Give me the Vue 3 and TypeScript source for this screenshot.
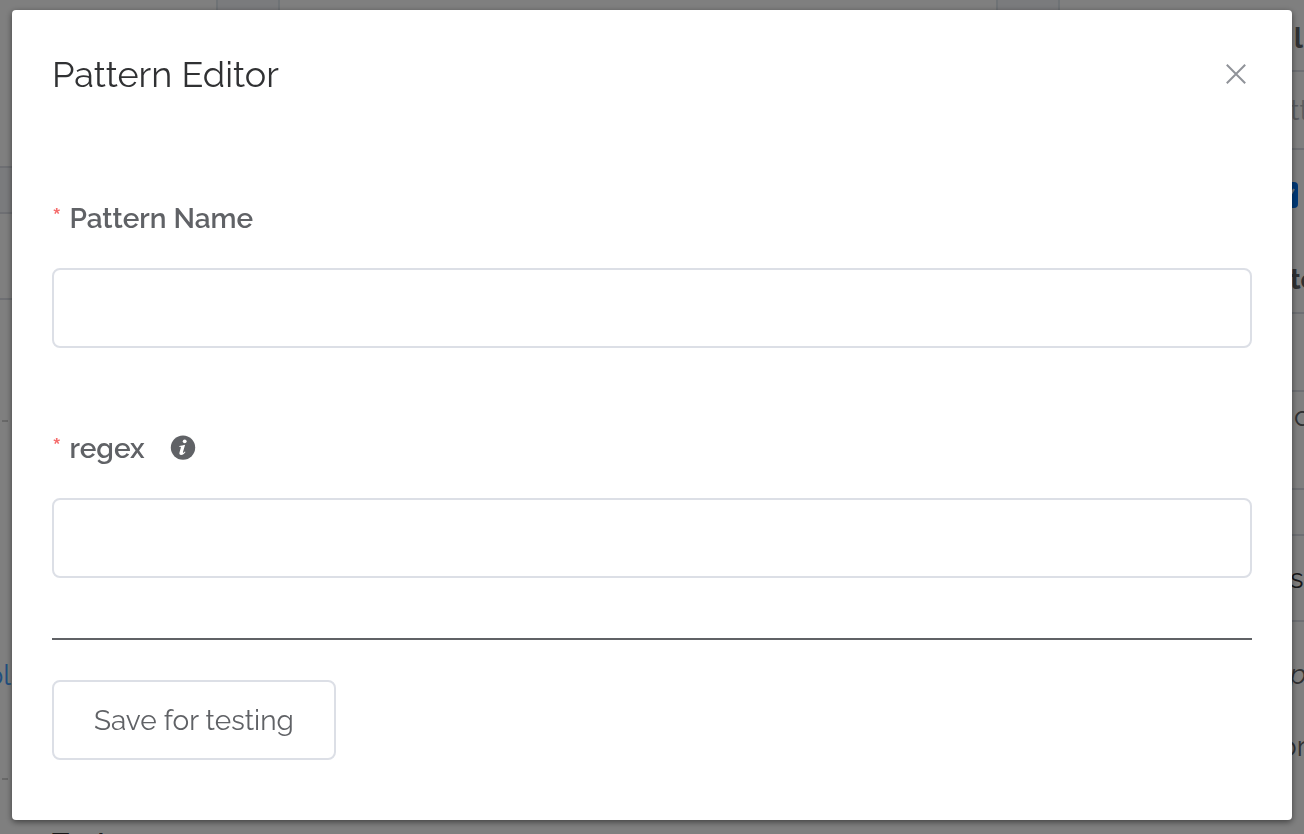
<script setup lang="ts">
import { ref } from 'vue'

interface Cell {
  text?: string
  kind: string
  height: number
}

const open = ref(true)
const patternName = ref('')
const regex = ref('')

const leftCells: Cell[] = [
  { kind: 'line', height: 168 },
  { kind: 'line band', height: 46 },
  { kind: 'line', height: 86 },
  { kind: 'dash', height: 122 },
  { kind: 'blank', height: 208 },
  { kind: 'link', height: 90, text: 'ble' },
  { kind: 'dash', height: 60 },
]

const rightCells: Cell[] = [
  { kind: 'line strong inset low', height: 72, text: 'l' },
  { kind: 'line muted', height: 78, text: 'tt' },
  { kind: 'check', height: 90 },
  { kind: 'line strong low', height: 74, text: 'te' },
  { kind: 'line', height: 78 },
  { kind: 'inset', height: 48, text: 'c' },
  { kind: 'line', height: 50 },
  { kind: 'line', height: 46 },
  { kind: 'line dark', height: 86, text: 's' },
  { kind: 'slanted', height: 104, text: 'p' },
  { kind: 'outset', height: 40, text: 'or' },
]
</script>

<template>
  <div class="page">
    <div class="columns">
      <div class="side">
        <div v-for="(cell, i) in leftCells" :key="i" class="cell" :class="cell.kind" :style="{ height: cell.height + 'px' }">
          <a v-if="cell.text" href="#">{{ cell.text }}</a>
        </div>
      </div>
      <div class="middle">
        <div class="tabs"><span class="tab"></span><span class="tab"></span></div>
        <div class="next">Test</div>
      </div>
      <div class="side right">
        <div v-for="(cell, i) in rightCells" :key="i" class="cell" :class="cell.kind" :style="{ height: cell.height + 'px' }">
          <svg v-if="cell.kind === 'check'" width="28" height="26" viewBox="0 0 28 26">
            <rect width="28" height="26" rx="4" fill="#0074f0" />
            <path d="M12 14l5 5 7-12" fill="none" stroke="#fff" stroke-width="2" />
          </svg>
          <span v-else>{{ cell.text }}</span>
        </div>
      </div>
    </div>

    <div v-if="open" class="overlay">
      <section class="dialog" role="dialog" aria-modal="true" aria-labelledby="dialog-title">
        <header class="header">
          <h1 id="dialog-title">Pattern Editor</h1>
          <button class="close" type="button" aria-label="Close" @click="open = false">
            <svg width="32" height="32" viewBox="0 0 32 32">
              <path d="M6.8 6.8l18.4 18.4M25.2 6.8l-18.4 18.4" fill="none" stroke="#909399" stroke-width="2" />
            </svg>
          </button>
        </header>
        <form @submit.prevent>
          <div class="field">
            <label for="pattern-name"><span class="star">*</span>Pattern Name</label>
            <input id="pattern-name" v-model="patternName" type="text" required />
          </div>
          <div class="field">
            <label for="regex"><span class="star">*</span>regex
              <svg class="info" width="26" height="26" viewBox="0 0 26 26" aria-hidden="true">
                <circle cx="13" cy="12.6" r="12.2" fill="#606266" />
                <circle cx="14.7" cy="6.3" r="1.9" fill="#fff" />
                <path d="M9.3 10.9c1.8-.2 3.6-.6 5.8-1.1l-2.1 7.3c-.2.8.1.9.5.6.5-.3.9-.8 1.3-1.3l.7.5c-1.3 2-2.8 3-4.3 3-1.6 0-2.1-.9-1.7-2.3l1.3-4.8c.2-.8 0-1.1-.7-1.1h-.9z" fill="#fff" />
              </svg>
            </label>
            <input id="regex" v-model="regex" type="text" required />
          </div>
          <hr />
          <button class="save" type="submit">Save for testing</button>
        </form>
      </section>
    </div>
  </div>
</template>

<style>
body {
  margin: 0;
}
</style>

<style scoped>
.page {
  height: 100vh;
  overflow: hidden;
  background: #fff;
  color: #606266;
  font-family: Raleway, Lato, "Open Sans", sans-serif;
  font-size: 28px;
}
.page * {
  box-sizing: border-box;
}
.columns {
  display: flex;
  height: 100%;
}
.side {
  width: 12px;
  flex: none;
}
.right {
  width: 24px;
}
.cell {
  display: flex;
  align-items: center;
  white-space: nowrap;
}
.right .cell {
  padding-left: 10px;
}
.right .inset {
  padding-left: 14px;
}
.right .outset {
  padding-left: 0;
}
.right .low {
  padding-top: 6px;
}
.line {
  border-bottom: 2px solid #dcdfe6;
}
.band {
  background: #f5f7fa;
}
.strong {
  font-weight: 700;
}
.muted {
  color: #b4b6bc;
}
.dark {
  color: #303133;
}
.slanted {
  font-style: italic;
}
.right .check {
  align-items: flex-start;
  padding: 32px 6px 0 0;
  justify-content: flex-end;
}
.check svg {
  flex: none;
}
.dash::after {
  content: "";
  width: 6px;
  height: 2px;
  margin-left: 2px;
  align-self: flex-end;
  background: #d0d0d0;
}
.link a {
  color: #409eff;
  text-decoration: none;
  margin-left: -14px;
}
.middle {
  flex: 1;
  display: flex;
  flex-direction: column;
  justify-content: space-between;
}
.tabs {
  display: flex;
  justify-content: space-between;
  height: 12px;
  padding: 0 220px 0 204px;
}
.tab {
  width: 64px;
  background: #f5f7fa;
  border: 2px solid #dfe6ec;
  border-width: 0 2px;
}
.next {
  height: 8px;
  padding-left: 40px;
  color: #303133;
  font-weight: 600;
  line-height: 36px;
}
.overlay {
  position: fixed;
  inset: 0;
  display: flex;
  align-items: flex-start;
  padding: 10px 12px;
  background: rgba(0, 0, 0, 0.5);
}
.dialog {
  flex: 1;
  padding: 40px 40px 60px;
  border-radius: 4px;
  background: #fff;
  box-shadow: 0 2px 6px rgba(0, 0, 0, 0.5);
}
.header {
  display: flex;
  align-items: center;
  justify-content: space-between;
  margin-bottom: 90px;
}
h1 {
  margin: 0;
  color: #303133;
  font-size: 36px;
  font-weight: 400;
  line-height: 48px;
}
.close {
  display: flex;
  padding: 0;
  border: 0;
  background: none;
  cursor: pointer;
}
.field + .field {
  margin-top: 70px;
}
label {
  display: flex;
  align-items: center;
  height: 60px;
  margin-bottom: 20px;
  font-weight: 600;
}
.star {
  margin-right: 8px;
  color: #f56c6c;
}
.info {
  margin-left: 25px;
}
input {
  display: block;
  width: 100%;
  height: 80px;
  padding: 0 30px;
  border: 2px solid #dcdfe6;
  border-radius: 8px;
  background: #fff;
  color: #606266;
  font: inherit;
}
input:focus {
  outline: none;
  border-color: #409eff;
}
hr {
  height: 2px;
  margin: 60px 0 40px;
  border: 0;
  background: #606266;
}
.save {
  display: block;
  height: 80px;
  padding: 0 40px;
  border: 2px solid #dcdfe6;
  border-radius: 8px;
  background: #fff;
  color: #606266;
  font: inherit;
  cursor: pointer;
}
</style>
